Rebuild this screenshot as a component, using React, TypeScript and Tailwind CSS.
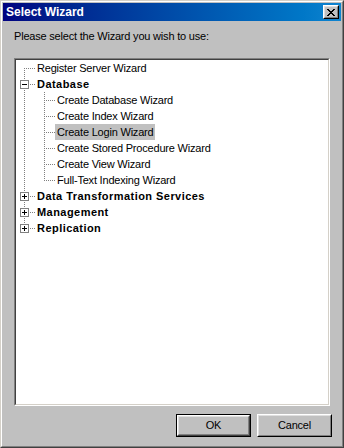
import React from 'react';

type Row = {
  label: string;
  level: 0 | 1;
  kind: 'leaf' | 'minus' | 'plus';
  bold?: boolean;
  first?: boolean;
  last?: boolean;
  selected?: boolean;
};

const ROWS: Row[] = [
  { label: 'Register Server Wizard', level: 0, kind: 'leaf', first: true },
  { label: 'Database', level: 0, kind: 'minus', bold: true },
  { label: 'Create Database Wizard', level: 1, kind: 'leaf' },
  { label: 'Create Index Wizard', level: 1, kind: 'leaf' },
  { label: 'Create Login Wizard', level: 1, kind: 'leaf', selected: true },
  { label: 'Create Stored Procedure Wizard', level: 1, kind: 'leaf' },
  { label: 'Create View Wizard', level: 1, kind: 'leaf' },
  { label: 'Full-Text Indexing Wizard', level: 1, kind: 'leaf', last: true },
  { label: 'Data Transformation Services', level: 0, kind: 'plus', bold: true },
  { label: 'Management', level: 0, kind: 'plus', bold: true },
  { label: 'Replication', level: 0, kind: 'plus', bold: true, last: true },
];

// dotted connector: one gray pixel on every other position
function vDots(x: number, y0: number, y1: number) {
  const out = [];
  for (let y = y0; y <= y1; y += 2) out.push(<rect key={`v${x}-${y}`} x={x} y={y} width={1} height={1} fill="#808080" />);
  return out;
}

function hDots(y: number, x0: number, x1: number) {
  const out = [];
  for (let x = x0; x <= x1; x += 2) out.push(<rect key={`h${y}-${x}`} x={x} y={y} width={1} height={1} fill="#808080" />);
  return out;
}

function Gutter({ row }: { row: Row }) {
  const w = row.level === 0 ? 19 : 39;
  return (
    <svg width={w} height={16} className="shrink-0" shapeRendering="crispEdges">
      {row.level === 0 ? (
        <>
          {vDots(8, row.first ? 8 : 0, row.last ? 8 : 14)}
          {row.kind === 'leaf' ? (
            hDots(8, 10, 18)
          ) : (
            <>
              <rect x={4.5} y={4.5} width={8} height={8} fill="#fff" stroke="#808080" />
              <rect x={6} y={8} width={5} height={1} fill="#000" />
              {row.kind === 'plus' && <rect x={8} y={6} width={1} height={5} fill="#000" />}
              {hDots(8, 14, 18)}
            </>
          )}
        </>
      ) : (
        <>
          {vDots(8, 0, 14)}
          {vDots(28, 0, row.last ? 8 : 14)}
          {hDots(8, 30, 38)}
        </>
      )}
    </svg>
  );
}

export default function App() {
  return (
    <div className="w-[344px] h-[448px] bg-[#c0c0c0] font-['Liberation_Sans',Arial,sans-serif] text-[11px] tracking-[-0.2px] text-black border border-t-[#d4d0c8] border-l-[#d4d0c8] border-r-[#404040] border-b-[#404040]">
      <div className="h-full border border-t-white border-l-white border-r-[#808080] border-b-[#808080] p-[1px] flex flex-col">
        {/* Title bar */}
        <div className="h-[18px] flex items-center justify-between bg-gradient-to-r from-[#000080] to-[#1084d0] pl-[3px] pr-[2px]">
          <span className="text-white font-bold text-[12px] tracking-normal leading-[18px]">Select Wizard</span>
          <div className="w-[16px] h-[14px] border border-t-white border-l-white border-r-black border-b-black">
            <div className="w-full h-full bg-[#c0c0c0] border border-t-[#dfdfdf] border-l-[#dfdfdf] border-r-[#808080] border-b-[#808080] flex items-center justify-center">
              <svg width="8" height="7" shapeRendering="crispEdges">
                <path d="M0 0h2v1h-2zM6 0h2v1h-2zM1 1h2v1h-2zM5 1h2v1h-2zM2 2h4v1h-4zM3 3h2v1h-2zM2 4h4v1h-4zM1 5h2v1h-2zM5 5h2v1h-2zM0 6h2v1h-2zM6 6h2v1h-2z" fill="#000" />
              </svg>
            </div>
          </div>
        </div>

        <div className="mt-[9px] ml-[11px] leading-[13px]">Please select the Wizard you wish to use:</div>

        {/* Tree view */}
        <div className="mt-[15px] ml-[11px] w-[316px] h-[348px] border border-t-[#808080] border-l-[#808080] border-r-white border-b-white">
          <div className="w-full h-full bg-white border border-t-[#404040] border-l-[#404040] border-r-[#d4d0c8] border-b-[#d4d0c8]">
            {ROWS.map((row) => (
              <div key={row.label} className="h-[16px] flex items-center">
                <Gutter row={row} />
                <span
                  className={`h-[16px] leading-[16px] px-[2px] whitespace-nowrap ${row.bold ? 'font-bold tracking-[0.45px]' : ''} ${row.selected ? 'bg-[#c0c0c0]' : ''}`}
                >
                  {row.label}
                </span>
              </div>
            ))}
          </div>
        </div>

        {/* Buttons */}
        <div className="mt-[8px] flex justify-end gap-[6px] pr-[9px]">
          <button className="w-[75px] h-[23px] border border-black">
            <div className="w-full h-full border border-t-white border-l-white border-r-[#404040] border-b-[#404040]">
              <div className="w-full h-full border border-t-[#dfdfdf] border-l-[#dfdfdf] border-r-[#808080] border-b-[#808080] flex items-center justify-center">
                OK
              </div>
            </div>
          </button>
          <button className="w-[75px] h-[23px] border border-t-white border-l-white border-r-black border-b-black">
            <div className="w-full h-full border border-t-[#dfdfdf] border-l-[#dfdfdf] border-r-[#808080] border-b-[#808080] flex items-center justify-center">
              Cancel
            </div>
          </button>
        </div>
      </div>
    </div>
  );
}
